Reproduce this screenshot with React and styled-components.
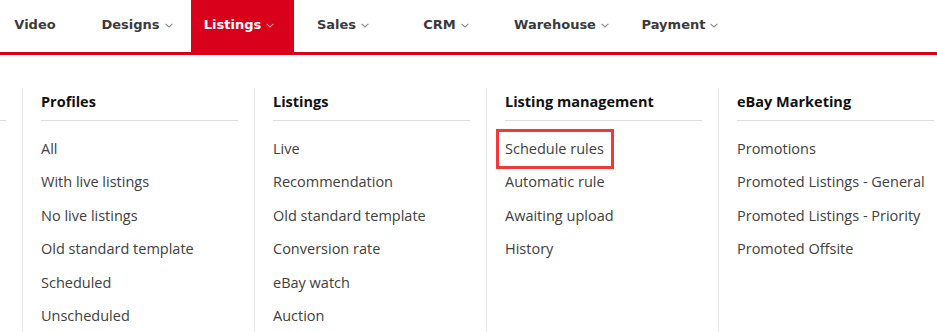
import React from 'react'
import styled, { createGlobalStyle } from 'styled-components'

const GlobalStyle = createGlobalStyle`
  * { box-sizing: border-box; }
  html, body { margin: 0; padding: 0; background: #fff; }
  body { font-family: "Open Sans", "Noto Sans", sans-serif; }
`

const tabs = [
  { label: 'Video', width: 90, arrow: false },
  { label: 'Designs', width: 101, arrow: true },
  { label: 'Listings', width: 103, arrow: true, active: true },
  { label: 'Sales', width: 105, arrow: true },
  { label: 'CRM', width: 101, arrow: true },
  { label: 'Warehouse', width: 130, arrow: true },
  { label: 'Payment', width: 107, arrow: true },
]

const columns = [
  { title: '', items: [] },
  {
    title: 'Profiles',
    items: ['All', 'With live listings', 'No live listings', 'Old standard template', 'Scheduled', 'Unscheduled'],
  },
  {
    title: 'Listings',
    items: ['Live', 'Recommendation', 'Old standard template', 'Conversion rate', 'eBay watch', 'Auction'],
  },
  {
    title: 'Listing management',
    items: ['Schedule rules', 'Automatic rule', 'Awaiting upload', 'History'],
    marked: 'Schedule rules',
  },
  {
    title: 'eBay Marketing',
    items: ['Promotions', 'Promoted Listings - General', 'Promoted Listings - Priority', 'Promoted Offsite'],
  },
]

const Chevron = ({ hidden }) => (
  <ChevronIcon viewBox="0 0 8 5" $hidden={hidden}>
    <path d="M0.6 0.8 L4 4 L7.4 0.8" fill="none" stroke="currentColor" strokeWidth="1.1" />
  </ChevronIcon>
)

const App = () => {
  return (
    <Page>
      <GlobalStyle />
      <TopNav>
        {tabs.map((tab) => (
          <NavItem key={tab.label} $w={tab.width} $active={tab.active}>
            <span>{tab.label}</span>
            <Chevron hidden={!tab.arrow} />
          </NavItem>
        ))}
      </TopNav>
      <MenuPanel>
        <Columns>
          {columns.map((col, i) => (
            <Column key={i}>
              <ColumnTitle>{col.title || '\u00a0'}</ColumnTitle>
              <ItemList>
                {col.items.map((item) => (
                  <MenuItem key={item} $marked={col.marked === item}>
                    {item}
                  </MenuItem>
                ))}
              </ItemList>
            </Column>
          ))}
        </Columns>
      </MenuPanel>
    </Page>
  )
}

const Page = styled.div`
  width: 937px;
  height: 332px;
  overflow: hidden;
  background: #fff;
`

const TopNav = styled.nav`
  display: flex;
  height: 55px;
  border-bottom: 3px solid #d9001b;
`

const NavItem = styled.div`
  width: ${(props) => props.$w}px;
  height: 52px;
  display: flex;
  align-items: center;
  justify-content: center;
  gap: 5px;
  padding-bottom: 3px;
  font-family: "DejaVu Sans", sans-serif;
  font-weight: 700;
  font-size: 13px;
  color: ${(props) => (props.$active ? '#fff' : '#3a3a3a')};
  background: ${(props) => (props.$active ? '#d9001b' : 'transparent')};
  cursor: pointer;
`

const ChevronIcon = styled.svg`
  width: 8px;
  height: 5px;
  margin-right: 7px;
  margin-top: 2px;
  color: ${(props) => (props.$hidden ? 'transparent' : 'inherit')};
  opacity: 0.6;
`

const MenuPanel = styled.div`
  overflow: hidden;
  padding-top: 33px;
`

const Columns = styled.div`
  display: grid;
  grid-template-columns: repeat(5, 232px);
  margin-left: -209px;
`

const Column = styled.div`
  border-right: 1px solid #e6e6e6;
  padding: 0 16px 0 18px;
  height: 300px;
`

const ColumnTitle = styled.div`
  height: 33px;
  padding-top: 2px;
  border-bottom: 1px solid #dedede;
  font-size: 14.5px;
  font-weight: 700;
  color: #111;
  line-height: 24px;
`

const ItemList = styled.ul`
  list-style: none;
  margin: 0;
  padding: 11px 0 0;
`

const MenuItem = styled.li`
  position: relative;
  height: 33.4px;
  line-height: 33px;
  font-size: 14.5px;
  color: #404040;
  width: max-content;
  cursor: pointer;

  &::after {
    content: '';
    display: ${(props) => (props.$marked ? 'block' : 'none')};
    position: absolute;
    left: -9px;
    right: -10px;
    top: -3px;
    bottom: -4px;
    border: 3px solid #ef3a3a;
  }
`

export default App
